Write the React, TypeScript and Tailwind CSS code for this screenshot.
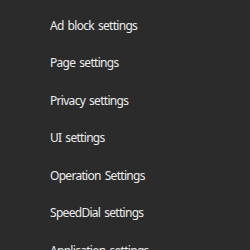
const items = [
  "Ad block settings",
  "Page settings",
  "Privacy settings",
  "UI settings",
  "Operation Settings",
  "SpeedDial settings",
  "Application settings",
];

export default function App() {
  return (
    <main className="h-[250px] w-[250px] overflow-hidden bg-[#2b2b2b] pt-[7px] font-['Noto_Sans',sans-serif]">
      <ul className="flex flex-col">
        {items.map((label) => (
          <li
            key={label}
            className="flex h-[37.5px] shrink-0 items-center pl-[50px] text-[12px] tracking-[-0.7px] [word-spacing:1.5px] text-[#ececec]"
          >
            {label}
          </li>
        ))}
      </ul>
    </main>
  );
}
